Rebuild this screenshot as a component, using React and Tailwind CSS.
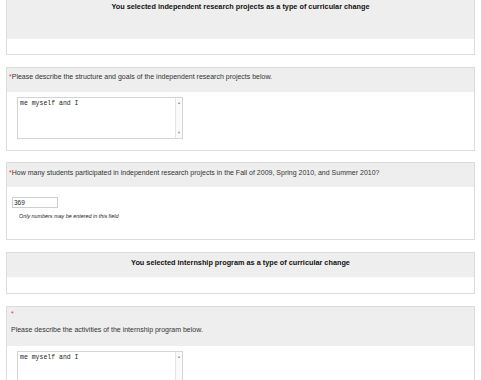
import React from 'react'

const font = { fontFamily: '"Liberation Sans", Arial, sans-serif' }

const FakeTextarea = ({ text }) => (
  <div className="flex w-[166px] h-[42px] border border-[#d4d4d4] bg-white">
    <div className="flex-1 px-[2px] pt-[3px] text-[6.5px] leading-none text-[#222] font-['Liberation_Mono',monospace]">
      {text}
    </div>
    <div className="w-[7px] border-l border-[#e6e6e6] bg-[#fafafa] flex flex-col justify-between items-center py-[3px]">
      <span className="text-[4px] leading-none text-[#9a9a9a]">▲</span>
      <span className="text-[4px] leading-none text-[#9a9a9a]">▼</span>
    </div>
  </div>
)

const Panel = ({ children, className = '' }) => (
  <div className={`mx-[6px] w-[469px] border border-[#dcdcdc] bg-white ${className}`}>{children}</div>
)

const Req = () => <span className="text-[#e33]">*</span>

export default function App() {
  return (
    <div className="w-[481px] h-[380px] overflow-hidden bg-white text-[#333]" style={font}>
      {/* section title: independent research */}
      <Panel className="border-t-0">
        <div className="h-[39px] bg-[#eeeeee] pt-[2px] text-center text-[7.3px] font-bold text-[#111] leading-[9px]">
          You selected independent research projects as a type of curricular change
        </div>
        <div className="h-[15px]" />
      </Panel>

      {/* structure and goals */}
      <Panel className="mt-[12px]">
        <div className="h-[24px] bg-[#eeeeee] pl-[2px] pt-[4px] text-[7px] leading-[9px]">
          <Req />Please describe the structure and goals of the independent research projects below.
        </div>
        <div className="pl-[10px] pt-[5px] pb-[11px]">
          <FakeTextarea text="me myself and I" />
        </div>
      </Panel>

      {/* how many students */}
      <Panel className="mt-[11px]">
        <div className="h-[24px] bg-[#eeeeee] pl-[2px] pt-[5px] text-[7px] leading-[9px]">
          <Req />How many students participated in independent research projects in the Fall of 2009, Spring 2010, and Summer 2010?
        </div>
        <div className="pl-[5px] pt-[10px] h-[52px]">
          <div className="w-[46px] h-[11px] border border-[#cfcfcf] pl-[1px] text-[6.5px] leading-[10px] text-[#222]">369</div>
          <div className="pl-[7px] pt-[5px] text-[5.4px] italic leading-[6px] text-[#222]">
            Only numbers may be entered in this field
          </div>
        </div>
      </Panel>

      {/* section title: internship */}
      <Panel className="mt-[12px]">
        <div className="h-[24px] bg-[#eeeeee] pt-[5px] text-center text-[7.3px] font-bold text-[#111] leading-[9px]">
          You selected internship program as a type of curricular change
        </div>
        <div className="h-[16px]" />
      </Panel>

      {/* internship activities */}
      <Panel className="mt-[12px]">
        <div className="h-[39px] bg-[#eeeeee] pl-[4px] pt-[2px] text-[7px] leading-[9px]">
          <div><Req /></div>
          <div className="pt-[7px]">Please describe the activities of the internship program below.</div>
        </div>
        <div className="pl-[10px] pt-[5px] pb-[11px]">
          <FakeTextarea text="me myself and I" />
        </div>
      </Panel>
    </div>
  )
}
